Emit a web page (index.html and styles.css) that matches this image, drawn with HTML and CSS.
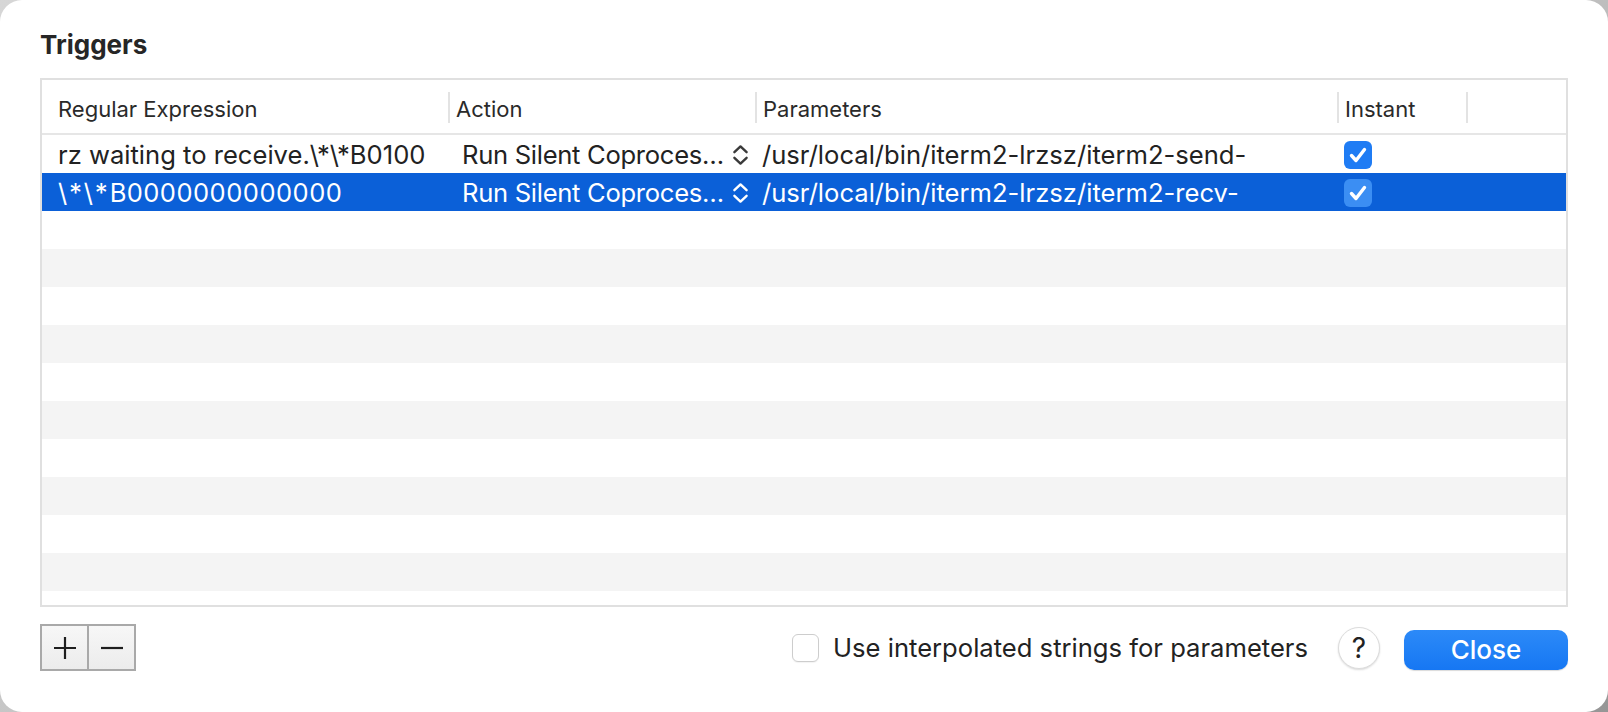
FILE: index.html
```html
<!DOCTYPE html>
<html>
<head>
<meta charset="utf-8">
<link rel="stylesheet" href="styles.css">
</head>
<body>
<div class="window">
  <h1 class="title">Triggers</h1>
  <div class="table">
    <div class="thead">
      <div class="th"><span class="th-label first">Regular Expression</span></div>
      <div class="th"><span class="th-label">Action</span></div>
      <div class="th"><span class="th-label">Parameters</span></div>
      <div class="th"><span class="th-label">Instant</span></div>
      <div class="th"><span class="th-label"></span></div>
    </div>
    <div class="tbody">
      <div class="row">
        <div class="cell c-regex">rz waiting to receive.\*\*B0100</div>
        <div class="cell c-action"><span class="action-text">Run Silent Coproces…</span>
          <svg class="chev" viewBox="0 0 17 22" width="17" height="22"><polyline points="2.4,8.2 8.5,2.4 14.6,8.2"/><polyline points="2.4,13.8 8.5,19.6 14.6,13.8"/></svg>
        </div>
        <div class="cell c-param">/usr/local/bin/iterm2-lrzsz/iterm2-send-</div>
        <div class="cell c-instant">
          <svg class="check" viewBox="0 0 28 28" width="28" height="28"><rect x="0" y="0" width="28" height="28" rx="6" class="check-bg"/><path d="M7.5 14.5 L12 19.5 L20.5 8.5"/></svg>
        </div>
        <div class="cell"></div>
      </div>
      <div class="row selected">
        <div class="cell c-regex tabular">\*\*B0000000000000</div>
        <div class="cell c-action"><span class="action-text">Run Silent Coproces…</span>
          <svg class="chev" viewBox="0 0 17 22" width="17" height="22"><polyline points="2.4,8.2 8.5,2.4 14.6,8.2"/><polyline points="2.4,13.8 8.5,19.6 14.6,13.8"/></svg>
        </div>
        <div class="cell c-param">/usr/local/bin/iterm2-lrzsz/iterm2-recv-</div>
        <div class="cell c-instant">
          <svg class="check" viewBox="0 0 28 28" width="28" height="28"><rect x="0" y="0" width="28" height="28" rx="6" class="check-bg"/><path d="M7.5 14.5 L12 19.5 L20.5 8.5"/></svg>
        </div>
        <div class="cell"></div>
      </div>
      <div class="row empty"></div>
      <div class="row empty"></div>
      <div class="row empty"></div>
      <div class="row empty"></div>
      <div class="row empty"></div>
      <div class="row empty"></div>
      <div class="row empty"></div>
      <div class="row empty"></div>
      <div class="row empty"></div>
      <div class="row empty"></div>
      <div class="row empty"></div>
    </div>
  </div>
  <div class="bottom">
    <div class="segmented">
      <div class="seg"><svg viewBox="0 0 24 24" width="24" height="24"><path d="M1 12 H23 M12 1 V23"/></svg></div>
      <div class="seg"><svg viewBox="0 0 24 24" width="24" height="24"><path d="M1 12 H23"/></svg></div>
    </div>
    <div class="right">
      <label class="opt"><span class="box"></span><span class="opt-text">Use interpolated strings for parameters</span></label>
      <div class="help">?</div>
      <div class="close">Close</div>
    </div>
  </div>
</div>
</body>
</html>
```
FILE: styles.css
```css
html, body {
  margin: 0;
  padding: 0;
}
body {
  width: 1608px;
  height: 712px;
  background: linear-gradient(150deg, #d6d6d6 0%, #c4c4c4 50%, #969696 100%);
  font-family: "Inter", "Liberation Sans", sans-serif;
  color: #222;
  overflow: hidden;
}
.window {
  width: 1608px;
  height: 712px;
  background: #fff;
  border-radius: 22px;
  box-sizing: border-box;
  padding: 29px 40px 0 40px;
}
.title {
  margin: 0;
  font-size: 26px;
  font-weight: 700;
  line-height: 32px;
  color: #262626;
}
.table {
  margin-top: 17px;
  width: 1528px;
  height: 529px;
  box-sizing: border-box;
  border: 2px solid #e0e0e0;
  overflow: hidden;
  background: #fff;
}
.thead {
  display: grid;
  grid-template-columns: 406px 307px 582px 129px 1fr;
  height: 55px;
  box-sizing: border-box;
  border-bottom: 2px solid #e6e6e6;
}
.th {
  padding-top: 12px;
}
.th-label {
  display: block;
  box-sizing: border-box;
  height: 31px;
  padding: 3px 0 0 6px;
  border-left: 2px solid #e3e3e3;
  font-size: 22px;
  line-height: 28px;
  color: #2a2a2a;
}
.th-label.first {
  border-left: none;
  padding-left: 16px;
}
.row {
  display: grid;
  grid-template-columns: 406px 307px 582px 129px 1fr;
  height: 38px;
  align-items: center;
  font-size: 25.6px;
  color: #222;
}
.row:nth-child(even) {
  background: #f4f4f4;
}
.row.selected {
  background: #0b60d8;
  color: #fff;
}
.cell {
  white-space: nowrap;
  overflow: hidden;
  height: 38px;
  box-sizing: border-box;
  padding-top: 1px;
  line-height: 37px;
  display: flex;
  align-items: center;
}
.c-regex {
  padding-left: 16px;
}
.c-regex.tabular {
  font-feature-settings: "tnum" 1;
}
.c-action {
  padding-left: 14px;
  padding-right: 6px;
}
.action-text {
  flex: 1 1 auto;
  min-width: 0;
  overflow: hidden;
  letter-spacing: -0.3px;
}
.chev {
  flex: 0 0 17px;
  width: 17px;
  height: 22px;
}
.chev polyline {
  fill: none;
  stroke: #3a3a3a;
  stroke-width: 2.4;
  stroke-linecap: round;
  stroke-linejoin: round;
}
.selected .chev polyline {
  stroke: #fff;
}
.c-param {
  padding-left: 7px;
}
.c-instant {
  padding-left: 7px;
}
.check {
  flex: 0 0 28px;
}
.check .check-bg {
  fill: #1f7cf4;
}
.selected .check .check-bg {
  fill: #3b8ef3;
}
.check path {
  fill: none;
  stroke: #fff;
  stroke-width: 3.4;
  stroke-linecap: round;
  stroke-linejoin: round;
}
.bottom {
  margin-top: 17px;
  width: 1528px;
  height: 47px;
  display: flex;
  align-items: center;
  justify-content: space-between;
}
.segmented {
  display: flex;
  height: 47px;
  box-sizing: border-box;
  border: 2px solid #a9a9a9;
  background: linear-gradient(#f7f7f7, #ececec);
}
.seg {
  width: 45px;
  display: flex;
  align-items: center;
  justify-content: center;
}
.seg + .seg {
  border-left: 2px solid #a9a9a9;
}
.seg path {
  fill: none;
  stroke: #1e1e1e;
  stroke-width: 2.2;
}
.right {
  display: flex;
  align-items: center;
}
.opt {
  display: flex;
  align-items: center;
}
.box {
  width: 27px;
  height: 28px;
  box-sizing: border-box;
  border: 1.5px solid #cdcdcd;
  border-radius: 6px;
  background: #fff;
  box-shadow: 0 1px 1px rgba(0,0,0,0.05);
}
.opt-text {
  margin-left: 14px;
  font-size: 25.6px;
  line-height: 32px;
  color: #222;
}
.help {
  margin-left: 30px;
  width: 42px;
  height: 42px;
  border-radius: 50%;
  box-sizing: border-box;
  border: 1px solid #dcdcdc;
  box-shadow: 0 1px 2px rgba(0,0,0,0.15);
  background: #fff;
  display: flex;
  align-items: center;
  justify-content: center;
  font-size: 28px;
  color: #222;
}
.close {
  margin-left: 24px;
  width: 164px;
  height: 40px;
  margin-top: 4px;
  border-radius: 10px;
  background: linear-gradient(#2c8af8, #1677f3);
  box-shadow: 0 1px 1px rgba(0,0,0,0.15);
  color: #fff;
  font-size: 26px;
  font-weight: 500;
  display: flex;
  align-items: center;
  justify-content: center;
}
```
